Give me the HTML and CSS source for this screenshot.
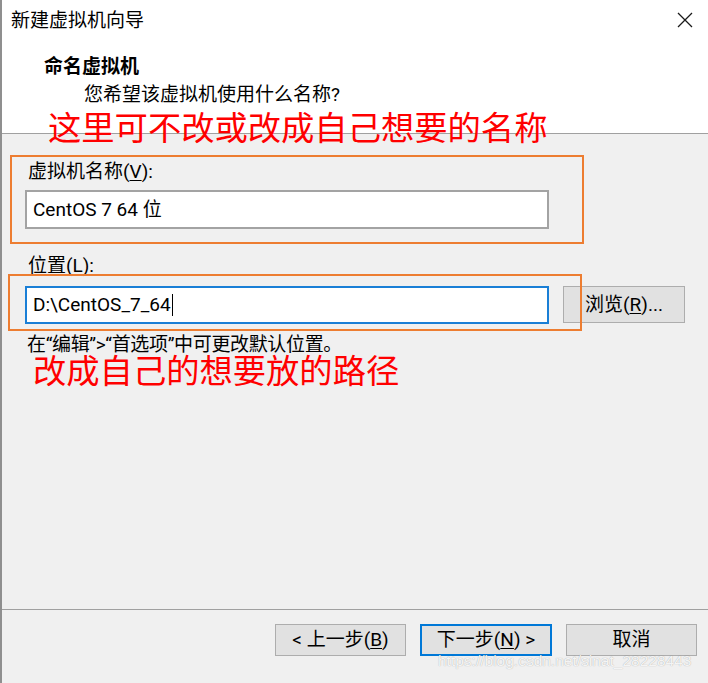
FILE: index.html
```html
<!DOCTYPE html>
<html lang="zh-CN">
<head>
<meta charset="utf-8">
<title>新建虚拟机向导</title>
<link rel="stylesheet" href="styles.css">
</head>
<body>
<div class="dialog">
  <div class="header">
    <div class="titlebar">
      <span class="title">新建虚拟机向导</span>
      <svg class="close" width="16" height="16" viewBox="0 0 16 16"><path d="M1 1 L15 15 M15 1 L1 15" stroke="#1a1a1a" stroke-width="1.3" fill="none"/></svg>
    </div>
    <div class="heading">命名虚拟机</div>
    <div class="sub">您希望该虚拟机使用什么名称?</div>
  </div>
  <div class="body">
    <div class="label">虚拟机名称(<u>V</u>):</div>
    <div class="input name-input">CentOS 7 64 位</div>
    <div class="label label2">位置(<u>L</u>):</div>
    <div class="row">
      <div class="input loc-input">D:\CentOS_7_64<span class="caret"></span></div>
      <div class="btn browse">浏览(<u>R</u>)...</div>
    </div>
    <div class="hint">在“编辑”&gt;“首选项”中可更改默认位置。</div>
  </div>
  <div class="footer">
    <div class="btn">&lt; 上一步(<u>B</u>)</div>
    <div class="btn default">下一步(<u>N</u>) &gt;</div>
    <div class="btn">取消</div>
  </div>
  <div class="note note1">这里可不改或改成自己想要的名称</div>
  <div class="note note2">改成自己的想要放的路径</div>
  <div class="mark mark1"></div>
  <div class="mark mark2"></div>
  <div class="watermark">https://blog.csdn.net/sinat_28228443</div>
</div>
</body>
</html>
```
FILE: styles.css
```css
html, body {
  margin: 0;
  padding: 0;
}
body {
  background: #f0f0f0;
  font-family: "Roboto", "Noto Sans CJK SC", sans-serif;
  font-size: 19px;
  color: #000;
}
.dialog {
  position: relative;
  width: 708px;
  height: 683px;
  box-sizing: border-box;
  border-left: 2px solid #8f8f8f;
  display: flex;
  flex-direction: column;
  overflow: hidden;
}
.header {
  background: #fff;
  height: 133px;
  border-bottom: 1px solid #a0a0a0;
  flex: none;
}
.titlebar {
  height: 42px;
  display: flex;
  align-items: center;
  justify-content: space-between;
  padding: 0 15px 0 9px;
}
.title {
  line-height: 24px;
}
.close {
  display: block;
  margin-top: -3px;
}
.heading {
  font-weight: bold;
  line-height: 24px;
  margin: 13px 0 0 42px;
}
.sub {
  line-height: 24px;
  margin: 4px 0 0 82px;
}
.body {
  display: flex;
  flex-direction: column;
  align-items: flex-start;
  padding: 26px 0 0 23px;
}
.label {
  line-height: 24px;
  margin-left: 3px;
}
u {
  text-decoration: underline;
  text-underline-offset: 2px;
}
.input {
  box-sizing: border-box;
  width: 524px;
  background: #fff;
  display: flex;
  align-items: center;
  padding-left: 6px;
  line-height: 24px;
}
.name-input {
  height: 39px;
  margin-top: 6px;
  border: 2px solid #a3a3a3;
}
.label2 {
  margin-top: 25px;
}
.row {
  display: flex;
  align-items: flex-start;
  gap: 14px;
  margin-top: 8px;
}
.loc-input {
  height: 38px;
  border: 2px solid #1a7fd6;
}
.caret {
  display: inline-block;
  width: 0;
  height: 22px;
  border-left: 1px solid #000;
  margin-left: 1px;
}
.btn {
  box-sizing: border-box;
  height: 32px;
  width: 131px;
  background: #e1e1e1;
  border: 1px solid #adadad;
  display: flex;
  align-items: center;
  justify-content: center;
  line-height: 24px;
}
.browse {
  width: 122px;
  height: 37px;
}
.hint {
  line-height: 20px;
  margin: 11px 0 0 2px;
  letter-spacing: -0.35px;
}
.footer {
  margin-top: auto;
  height: 59px;
  border-top: 1px solid #a0a0a0;
  display: flex;
  justify-content: flex-end;
  align-items: flex-start;
  gap: 14px;
  padding: 14px 11px 0 0;
  box-sizing: content-box;
}
.btn.default {
  border: 2px solid #0078d7;
  width: 132px;
}
.note {
  position: absolute;
  color: #ff0000;
  font-family: "Noto Sans CJK SC", sans-serif;
  font-size: 33.3px;
  line-height: 28px;
  white-space: nowrap;
}
.note1 {
  left: 46px;
  top: 112px;
}
.note2 {
  left: 31px;
  top: 355px;
}
.mark {
  position: absolute;
  border: 2px solid #ed7d31;
  box-sizing: border-box;
}
.mark1 {
  left: 8px;
  top: 155px;
  width: 574px;
  height: 89px;
}
.mark2 {
  left: 6px;
  top: 274px;
  width: 574px;
  height: 57px;
}
.watermark {
  position: absolute;
  left: 436px;
  top: 651px;
  font-family: "Liberation Sans", sans-serif;
  font-size: 15.5px;
  line-height: 20px;
  color: rgba(255, 255, 255, 0.9);
  text-shadow: 0 0 1px rgba(0, 0, 0, 0.35);
  white-space: nowrap;
}
```
